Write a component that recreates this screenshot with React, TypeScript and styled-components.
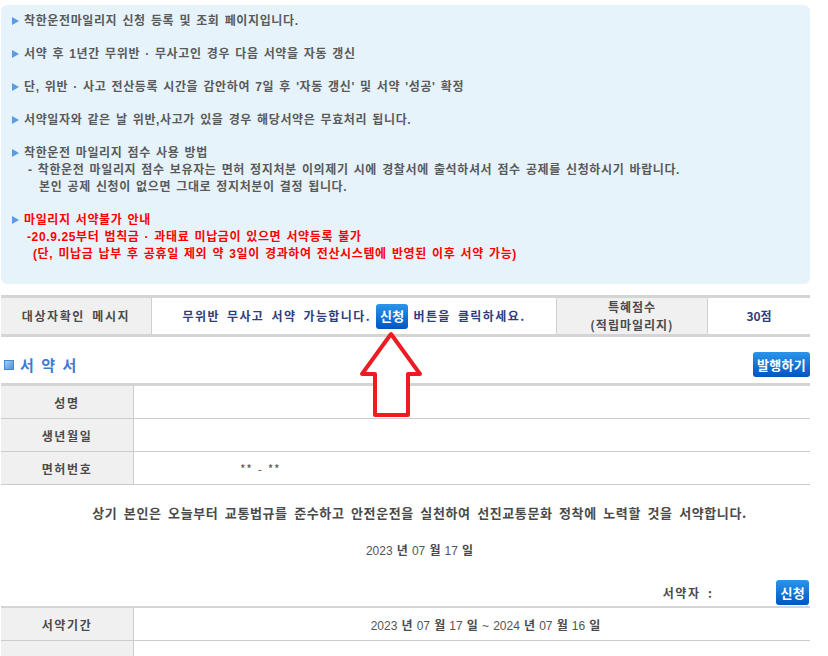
import React from 'react'
import styled, { createGlobalStyle } from 'styled-components'

const GlobalStyle = createGlobalStyle`
  body {
    margin: 0;
    background: #fff;
    font-family: 'Noto Sans CJK KR', 'Noto Sans', sans-serif;
  }
`

const notices = [
  '착한운전마일리지 신청 등록 및 조회 페이지입니다.',
  '서약 후 1년간 무위반 · 무사고인 경우 다음 서약을 자동 갱신',
  "단, 위반 · 사고 전산등록 시간을 감안하여 7일 후 '자동 갱신' 및 서약 '성공' 확정",
  '서약일자와 같은 날 위반,사고가 있을 경우 해당서약은 무효처리 됩니다.',
]

const App: React.FC = () => {
  return (
    <>
      <GlobalStyle />
      <Page>
        {/* notice box */}
        <Notice>
          {notices.map((text) => (
            <NoticeItem key={text}>{text}</NoticeItem>
          ))}
          <NoticeItem>
            착한운전 마일리지 점수 사용 방법
            <SubLine $indent={4}>
              - 착한운전 마일리지 점수 보유자는 면허 정지처분 이의제기 시에 경찰서에 출석하셔서 점수 공제를
              신청하시기 바랍니다.
            </SubLine>
            <SubLine $indent={15}>본인 공제 신청이 없으면 그대로 정지처분이 결정 됩니다.</SubLine>
          </NoticeItem>
          <NoticeItem $danger>
            마일리지 서약불가 안내
            <SubLine $indent={3}>-20.9.25부터 범칙금 · 과태료 미납금이 있으면 서약등록 불가</SubLine>
            <SubLine $indent={9}>
              (단, 미납금 납부 후 공휴일 제외 약 3일이 경과하여 전산시스템에 반영된 이후 서약 가능)
            </SubLine>
          </NoticeItem>
        </Notice>

        {/* target check */}
        <CheckTable>
          <LabelCell>대상자확인 메시지</LabelCell>
          <MessageCell>
            무위반 무사고 서약 가능합니다.
            <BlueButton>신청</BlueButton>
            버튼을 클릭하세요.
          </MessageCell>
          <LabelCell $tight>
            특혜점수
            <br />
            (적립마일리지)
          </LabelCell>
          <ValueCell>30점</ValueCell>
        </CheckTable>

        {/* pledge */}
        <TitleRow>
          <SectionTitle>
            <TitleIcon />
            서 약 서
          </SectionTitle>
          <BlueButton>발행하기</BlueButton>
        </TitleRow>

        <FormTable $topBorder={3}>
          <FormRow>
            <FormLabel>성명</FormLabel>
            <FormValue />
          </FormRow>
          <FormRow>
            <FormLabel>생년월일</FormLabel>
            <FormValue />
          </FormRow>
          <FormRow>
            <FormLabel>면허번호</FormLabel>
            <FormValue $align='left' $pad={106}>
              <Masked>** - **</Masked>
            </FormValue>
          </FormRow>
        </FormTable>

        <Pledge>
          <PledgeText>
            상기 본인은 오늘부터 교통법규를 준수하고 안전운전을 실천하여 선진교통문화 정착에 노력할 것을
            서약합니다.
          </PledgeText>
          <PledgeDate>
            <DateText>
              2023 <b>년</b> 07 <b>월</b> 17 <b>일</b>
            </DateText>
          </PledgeDate>
        </Pledge>

        <SignRow>
          <SignLabel>서약자 :</SignLabel>
          <BlueButton>신청</BlueButton>
        </SignRow>

        <FormTable $topBorder={2} $gap={1}>
          <FormRow>
            <FormLabel>서약기간</FormLabel>
            <FormValue $pad={27}>
              <DateText>
                2023 <b>년</b> 07 <b>월</b> 17 <b>일</b> ~ 2024 <b>년</b> 07 <b>월</b> 16 <b>일</b>
              </DateText>
            </FormValue>
          </FormRow>
          <FormRow>
            <FormLabel />
            <FormValue />
          </FormRow>
        </FormTable>

        {/* red arrow pointing at the button */}
        <Arrow width='66' height='90' viewBox='0 0 66 90'>
          <polygon
            points='33,4 4,44 17,44 17,85 50,85 50,44 62,44'
            fill='#fff'
            stroke='#ed1c24'
            strokeWidth='4'
            strokeLinejoin='round'
          />
        </Arrow>
      </Page>
    </>
  )
}

export default App

const Page = styled.div`
  position: relative;
  width: 809px;
  margin-left: 1px;
  padding-top: 5px;
`

const Notice = styled.div`
  background: #e6f3fa;
  border-radius: 6px;
  padding: 8px 10px 21px 11px;
`

const NoticeItem = styled.div<{ $danger?: boolean }>`
  position: relative;
  padding-left: 12px;
  margin-bottom: 16px;
  font-family: 'Liberation Sans', 'Noto Sans CJK KR', sans-serif;
  font-size: 12px;
  line-height: 17px;
  font-weight: 700;
  letter-spacing: 0.62px;
  word-spacing: 1.2px;
  color: ${({ $danger }) => ($danger ? '#ff0000' : '#5a5a5a')};
  &:last-child {
    margin-bottom: 0;
  }
  &::before {
    content: '';
    position: absolute;
    left: 0;
    top: 4px;
    border-left: 7px solid #5b9be0;
    border-top: 4px solid transparent;
    border-bottom: 4px solid transparent;
  }
`

const SubLine = styled.div<{ $indent: number }>`
  padding-left: ${({ $indent }) => $indent}px;
`

const CheckTable = styled.div`
  margin-top: 11px;
  display: grid;
  grid-template-columns: 151px 405px 151px 102px;
  height: 36px;
  border-top: 3px solid #d4d4d4;
  border-bottom: 3px solid #d4d4d4;
  font-size: 12px;
  font-weight: 700;
`

const Cell = styled.div`
  display: flex;
  align-items: center;
  justify-content: center;
  text-align: center;
  letter-spacing: 1.4px;
  word-spacing: 3px;
  line-height: 18px;
  border-right: 1px solid #d0d0d0;
  &:last-child {
    border-right: none;
  }
`

const LabelCell = styled(Cell)<{ $tight?: boolean }>`
  background: #f0f0f0;
  color: #4a4a4a;
  letter-spacing: ${({ $tight }) => ($tight ? '1px' : '1.6px')};
`

const MessageCell = styled(Cell)`
  color: #2e3d7c;
  gap: 5px;
`

const ValueCell = styled(Cell)`
  color: #2e3d7c;
  letter-spacing: 0;
`

const BlueButton = styled.span`
  display: inline-flex;
  align-items: center;
  justify-content: center;
  height: 25px;
  padding: 0 4px;
  border-radius: 3px;
  background: linear-gradient(#2b95ea, #0055c2);
  color: #fff;
  font-size: 13px;
  font-weight: 700;
  letter-spacing: 0.3px;
  word-spacing: 0;
  white-space: nowrap;
`

const TitleRow = styled.div`
  margin-top: 15px;
  height: 25px;
  display: flex;
  align-items: center;
  justify-content: space-between;
`

const SectionTitle = styled.h2`
  margin: 0;
  display: flex;
  align-items: center;
  gap: 6px;
  padding-left: 3px;
  font-size: 15px;
  font-weight: 700;
  color: #3f7bd2;
  letter-spacing: 1px;
  word-spacing: 2px;
`

const TitleIcon = styled.span`
  width: 8px;
  height: 8px;
  border: 1px solid #4a86d8;
  background: linear-gradient(135deg, #a9cdf5, #4d8ee0);
`

const FormTable = styled.div<{ $topBorder: number; $gap?: number }>`
  margin-top: ${({ $gap }) => $gap ?? 6}px;
  border-top: ${({ $topBorder }) => $topBorder}px solid #d4d4d4;
`

const FormRow = styled.div`
  display: grid;
  grid-template-columns: 133px 1fr;
  height: 32px;
  border-bottom: 1px solid #cccccc;
`

const FormLabel = styled.div`
  display: flex;
  align-items: center;
  justify-content: center;
  background: #f0f0f0;
  border-right: 1px solid #cccccc;
  font-size: 12px;
  font-weight: 700;
  color: #4a4a4a;
  letter-spacing: 1.6px;
`

const FormValue = styled.div<{ $align?: 'left' | 'center'; $pad?: number }>`
  display: flex;
  align-items: center;
  justify-content: ${({ $align }) => ($align === 'left' ? 'flex-start' : 'center')};
  padding-left: ${({ $pad }) => $pad ?? 0}px;
  font-size: 12px;
  color: #555;
`

const Masked = styled.span`
  letter-spacing: 0.6px;
  word-spacing: 2px;
`

const Pledge = styled.div`
  padding: 19px 0 0 28px;
  text-align: center;
`

const PledgeText = styled.p`
  margin: 0;
  font-size: 13px;
  line-height: 18px;
  font-weight: 700;
  color: #4a4a4a;
  letter-spacing: 0.6px;
  word-spacing: 3px;
`

const PledgeDate = styled.div`
  margin-top: 17px;
  line-height: 18px;
`

const DateText = styled.span`
  font-family: 'Liberation Sans', 'Noto Sans CJK KR', sans-serif;
  font-size: 12px;
  word-spacing: 0.8px;
  color: #555;
  b {
    font-family: 'Noto Sans CJK KR', sans-serif;
    font-weight: 700;
    color: #4a4a4a;
  }
`

const SignRow = styled.div`
  margin-top: 19px;
  height: 26px;
  display: flex;
  align-items: center;
  justify-content: flex-end;
  padding-right: 1px;
`

const SignLabel = styled.span`
  margin-right: 63px;
  font-size: 12px;
  font-weight: 700;
  color: #4a4a4a;
  letter-spacing: 1.6px;
  word-spacing: 3px;
`

const Arrow = styled.svg`
  position: absolute;
  left: 357px;
  top: 330px;
`
